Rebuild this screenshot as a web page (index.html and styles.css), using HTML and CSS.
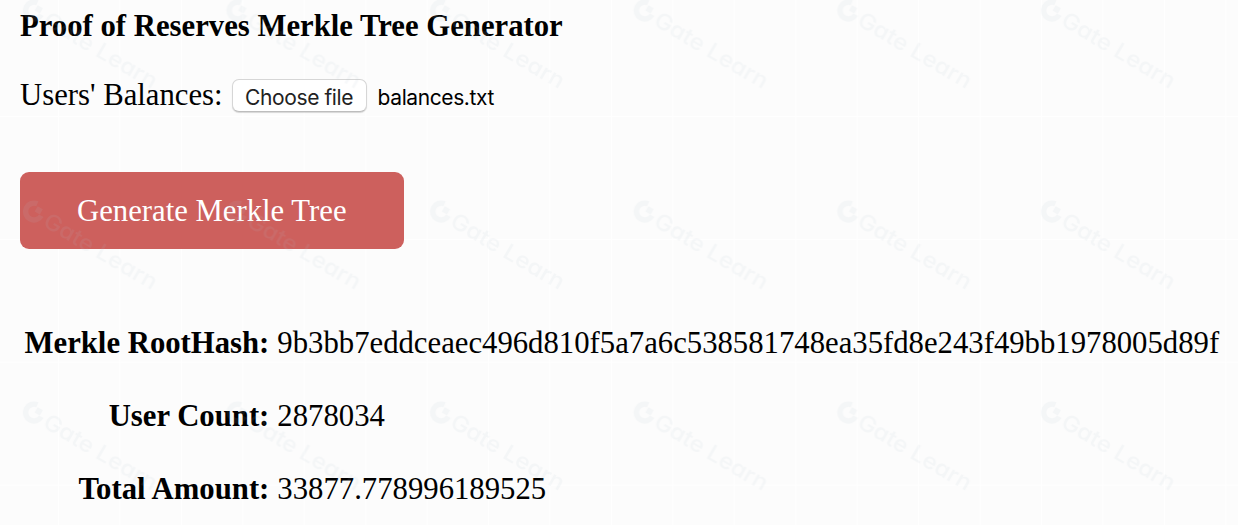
FILE: index.html
```
<!DOCTYPE html>
<html lang="en">
<head>
    <meta charset="UTF-8">
    <meta name="viewport" content="width=device-width, initial-scale=1.0">
    <title>Proof of Reserves Merkle Tree Generator</title>
    <link rel="stylesheet" href="styles.css">
</head>
<body>
    <h1 class="title">Proof of Reserves Merkle Tree Generator</h1>
    <form id="merkleForm">
        <div class="file-row">
            <span>Users' Balances:</span>
            <label class="file-button" for="balances">Choose file</label>
            <span class="file-name" id="fileName">balances.txt</span>
            <input type="file" id="balances" name="balances" hidden>
        </div>
        <button class="generate" type="button">Generate Merkle Tree</button>
    </form>

    <table class="results">
        <tr>
            <th>Merkle RootHash:</th>
            <td>9b3bb7eddceaec496d810f5a7a6c538581748ea35fd8e243f49bb1978005d89f</td>
        </tr>
        <tr>
            <th>User Count:</th>
            <td>2878034</td>
        </tr>
        <tr>
            <th>Total Amount:</th>
            <td>33877.778996189525</td>
        </tr>
    </table>

    <!-- watermark, tiled over the whole page -->
    <svg class="watermark" width="1238" height="525" aria-hidden="true">
        <defs>
            <pattern id="mark" x="14" y="-10" width="203.6" height="201" patternUnits="userSpaceOnUse">
                <g transform="translate(20 20.5) rotate(30.5)">
                    <path d="M-1 -8.3 A8.4 8.4 0 1 0 8.4 0" fill="none" stroke="#b4c6d2" stroke-width="5.4"/>
                    <rect x="0.5" y="-6.4" width="6" height="6" fill="#b4c6d2"/>
                    <text x="13.5" y="8" textLength="128" lengthAdjust="spacingAndGlyphs">Gate Learn</text>
                </g>
            </pattern>
        </defs>
        <rect width="1238" height="525" fill="url(#mark)"/>
    </svg>

    <script>
        document.getElementById('balances').addEventListener('change', function() {
            if (this.files.length) {
                document.getElementById('fileName').textContent = this.files[0].name;
            }
        });
    </script>
</body>
</html>
```
FILE: styles.css
```
body {
    margin: 0;
    padding: 8px 0 0 20px;
    box-sizing: border-box;
    height: 525px;
    overflow: hidden;
    font-family: "Liberation Serif", "Times New Roman", serif;
    font-size: 30.72px;
    line-height: 36px;
    color: #000;
    background-color: #fcfcfc;
    background-image:
        linear-gradient(#fff 1px, transparent 1px),
        linear-gradient(90deg, #fff 1px, transparent 1px);
    background-size: 100% 122.88px, 61.44px 100%;
    background-position: 0 116px, 58px 0;
}
.title {
    margin: 0;
    font-size: 30.72px;
    font-weight: bold;
}
.file-row {
    display: flex;
    align-items: center;
    margin-top: 33px;
    height: 36px;
}
.file-button {
    box-sizing: border-box;
    width: 135px;
    height: 33px;
    margin: 1px 11px 0 9px;
    border: 1px solid #d6d6d6;
    border-bottom-color: #bdbdbd;
    border-radius: 7px;
    background-color: #fff;
    box-shadow: 0 1px 1px rgba(0, 0, 0, 0.15);
    font-family: Inter, sans-serif;
    font-size: 21px;
    letter-spacing: -0.4px;
    line-height: 35px;
    text-align: center;
    color: #222;
    white-space: nowrap;
    cursor: pointer;
}
.file-name {
    margin-top: 5px;
    font-family: Inter, sans-serif;
    font-size: 21px;
    letter-spacing: -0.4px;
}
.generate {
    display: block;
    width: 384px;
    height: 77px;
    margin-top: 59px;
    padding: 1px 57px 0;
    border: none;
    border-radius: 9px;
    background-color: #cd605d;
    color: #fff;
    font-family: inherit;
    font-size: 30.72px;
    text-align: left;
    white-space: nowrap;
    cursor: pointer;
}
.results {
    margin: 57px 0 0 4.5px;
    border-collapse: collapse;
}
.results th,
.results td {
    height: 73px;
    padding: 0;
    white-space: nowrap;
}
.results th {
    text-align: right;
}
.results td {
    padding-left: 8px;
}
.watermark {
    position: absolute;
    top: 0;
    left: 0;
    opacity: 0.1;
    pointer-events: none;
}
.watermark text {
    font-family: Inter, sans-serif;
    font-size: 22px;
    font-weight: 500;
    font-feature-settings: "cv11";
    fill: #b4c6d2;
}
```
